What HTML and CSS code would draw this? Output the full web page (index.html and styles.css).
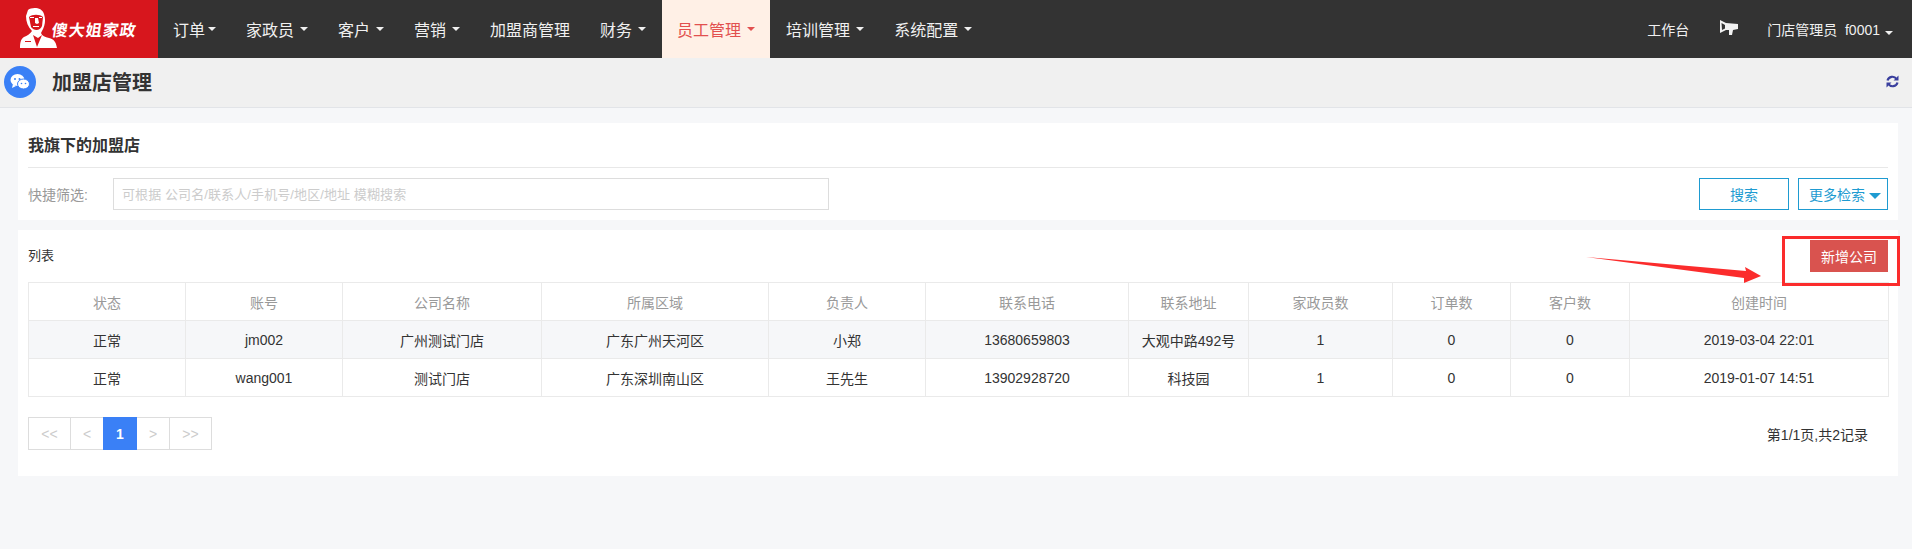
FILE: index.html
```html
<!DOCTYPE html>
<html lang="zh">
<head>
<meta charset="utf-8">
<title>加盟店管理</title>
<link rel="stylesheet" href="styles.css">
</head>
<body>
<header class="nav">
  <div class="logo">
    <svg class="logo-man" width="37" height="40" viewBox="0 0 37 40"><path fill="#fff" d="M8 2C12-1 22-1 24 6c2 6 1 12-2 17l-1 2c1 3 4 4 8 5 5 1 7 4 8 10H0c0-6 1-9 4-11 3-1 6-3 8-6C8 19 6 14 6 8z"/><path fill="#d7161d" d="M9 9c3-3 11-3 14 0l-1 9c-2 5-8 5-11 1z"/><path fill="#fff" d="M15 10h3l1 5-2 1-2-1zM10 9h4v1h-4zM19 9h3v1h-3zM13 18h6v1h-6z"/><path fill="#d7161d" d="M13 27l4 12 5-12-4 3zM5 33h6v1H5z"/></svg>
    <span class="logo-text">傻大姐家政</span>
  </div>
  <ul class="menu">
    <li class="item tight">订单<i class="caret"></i></li>
    <li class="item">家政员<i class="caret"></i></li>
    <li class="item">客户<i class="caret"></i></li>
    <li class="item">营销<i class="caret"></i></li>
    <li class="item">加盟商管理</li>
    <li class="item">财务<i class="caret"></i></li>
    <li class="item active">员工管理<i class="caret"></i></li>
    <li class="item">培训管理<i class="caret"></i></li>
    <li class="item">系统配置<i class="caret"></i></li>
  </ul>
  <div class="nav-right">
    <span>工作台</span>
    <svg class="horn" width="19" height="15" viewBox="0 0 19 15"><path fill="#f2f2f2" fill-rule="evenodd" d="M1 0l6 3 12 1v5l-5 1-1 5h-3v-5H7l-6 3zM2.500 3l.5 7 3-1.500V5z"/></svg>
    <span class="user">门店管理员&nbsp; f0001<i class="caret"></i></span>
  </div>
</header>

<div class="titlebar">
  <span class="title-icon">
    <svg width="20" height="18" viewBox="0 0 20 18"><ellipse cx="7.500" cy="7" rx="7" ry="6" fill="#fff"/><path fill="#fff" d="M3 11l-1 4 4-2z"/><ellipse cx="13.500" cy="11" rx="6" ry="5" fill="#fff" stroke="#3a80f6" stroke-width="1"/><circle cx="5" cy="6" r="1" fill="#3a80f6"/><circle cx="9.500" cy="6" r="1" fill="#3a80f6"/><circle cx="11.500" cy="10.500" r=".8" fill="#3a80f6"/><circle cx="15.500" cy="10.500" r=".8" fill="#3a80f6"/></svg>
  </span>
  <h1 class="page-title">加盟店管理</h1>
  <svg class="refresh" width="13" height="13" viewBox="0 0 13 13"><path fill="none" stroke="#3a3f9e" stroke-width="2.200" d="M1.500 5.500A5 5 0 0 1 10.500 4M11.500 7.500A5 5 0 0 1 2.500 9"/><path fill="#3a3f9e" d="M12.500 0.500v5h-5zM.5 12.500v-5h5z"/></svg>
</div>

<main class="content">
  <section class="card filter">
    <h2 class="card-title">我旗下的加盟店</h2>
    <div class="filter-row">
      <label class="filter-label">快捷筛选:</label>
      <input class="filter-input" type="text" placeholder="可根据 公司名/联系人/手机号/地区/地址 模糊搜索">
      <span class="spacer"></span>
      <button class="btn-outline">搜索</button>
      <button class="btn-outline more">更多检索<i class="caret-big"></i></button>
    </div>
  </section>

  <section class="card list">
    <div class="list-head">
      <span class="list-title">列表</span>
      <button class="btn-add">新增公司</button>
      <span class="mark-box"></span>
      <svg class="mark-arrow" width="180" height="40" viewBox="0 0 180 40"><path fill="#fb2c2c" d="M0 7l160 14-1-4 16 9-17 7v-5z"/></svg>
    </div>
    <table class="grid">
      <colgroup>
        <col class="c1"><col class="c2"><col class="c3"><col class="c4"><col class="c5"><col class="c6"><col class="c7"><col class="c8"><col class="c9"><col class="c10"><col class="c11">
      </colgroup>
      <thead>
        <tr><th>状态</th><th>账号</th><th>公司名称</th><th>所属区域</th><th>负责人</th><th>联系电话</th><th>联系地址</th><th>家政员数</th><th>订单数</th><th>客户数</th><th>创建时间</th></tr>
      </thead>
      <tbody>
        <tr class="odd"><td>正常</td><td>jm002</td><td>广州测试门店</td><td>广东广州天河区</td><td>小郑</td><td>13680659803</td><td>大观中路492号</td><td>1</td><td>0</td><td>0</td><td>2019-03-04 22:01</td></tr>
        <tr><td>正常</td><td>wang001</td><td>测试门店</td><td>广东深圳南山区</td><td>王先生</td><td>13902928720</td><td>科技园</td><td>1</td><td>0</td><td>0</td><td>2019-01-07 14:51</td></tr>
      </tbody>
    </table>
    <div class="pager-row">
      <div class="pager">
        <span class="pg w">&lt;&lt;</span><span class="pg">&lt;</span><span class="pg current">1</span><span class="pg">&gt;</span><span class="pg w">&gt;&gt;</span>
      </div>
      <span class="pager-info">第1/1页,共2记录</span>
    </div>
  </section>
</main>
</body>
</html>
```
FILE: styles.css
```css
* { box-sizing: border-box; }
html, body { margin: 0; padding: 0; }
body {
  height: 549px;
  overflow: hidden;
  background: #f6f7f9;
  color: #333;
  font-family: "Liberation Sans", "Noto Sans CJK SC", sans-serif;
  font-size: 13px;
}
.nav { display: flex; height: 58px; background: #333; color: #f0f0f0; }
.logo {
  width: 158px; background: #d7161d; display: flex; align-items: center;
  padding-left: 20px; flex: none;
}
.logo-man { flex: none; align-self: flex-start; margin-top: 8px; }
.logo-text {
  color: #fff; font-family: "Noto Sans CJK SC", sans-serif;
  font-size: 16px; font-weight: 700; letter-spacing: 1px; white-space: nowrap;
  margin-left: -5px;
  transform: skewX(-8deg);
}
.menu { display: flex; list-style: none; margin: 0; padding: 0; }
.item { display: flex; align-items: center; padding: 0 15px; font-size: 16px; height: 58px; white-space: nowrap; }
.item .caret { margin-left: 6px; }
.item.tight .caret { margin-left: 3px; }
.caret {
  display: inline-block; width: 0; height: 0; margin-left: 5px;
  border-left: 4px solid transparent; border-right: 4px solid transparent;
  border-top: 4px solid currentColor;
}
.item.active { background: #fff0e6; color: #e2504f; margin: 0 1px; }
.nav-right { margin-left: auto; display: flex; align-items: center; padding-right: 19px; font-size: 14px; }
.horn { margin: 0 29px 4px 30px; }
.titlebar {
  display: flex; align-items: center; height: 50px;
  background: #f0f0f0; border-bottom: 1px solid #e2e4e8; padding: 0 4px;
}
.title-icon {
  width: 32px; height: 32px; border-radius: 50%; background: #3a80f6;
  display: flex; align-items: center; justify-content: center; margin-bottom: 1px;
}
.page-title { margin: 0 0 2px 16px; font-size: 20px; font-weight: 700; color: #333; }
.refresh { margin-left: auto; margin-right: 9px; margin-bottom: 2px; }
.content { padding: 15px 14px 0 18px; }
.card { background: #fff; padding: 0 10px; }
.filter { height: 97px; }
.card-title {
  margin: 0; height: 45px; line-height: 46px; font-size: 16px; font-weight: 700;
  color: #333; border-bottom: 1px solid #e8e8e8;
}
.filter-row { display: flex; align-items: center; margin-top: 10px; }
.filter-label { width: 85px; font-size: 14px; color: #999; flex: none; }
.filter-input {
  width: 716px; height: 32px; border: 1px solid #ddd; padding: 0 8px;
  font-family: inherit; font-size: 13px; letter-spacing: .1px; background: #fff; outline: none;
}
.filter-input::placeholder { color: #ccc; opacity: 1; }
.spacer { flex: 1; }
.btn-outline {
  width: 90px; height: 32px; background: #fff; border: 1px solid #1e9bd1; color: #1e9bd1;
  font-family: inherit; font-size: 14px; padding: 0; margin-left: 9px; white-space: nowrap;
}
.btn-outline.more { padding-left: 4px; }
.caret-big {
  display: inline-block; width: 0; height: 0; margin-left: 4px; vertical-align: 1px;
  border-left: 6px solid transparent; border-right: 6px solid transparent;
  border-top: 6px solid #1e9bd1;
}
.list { margin-top: 10px; height: 246px; }
.list-head { position: relative; height: 52px; display: flex; align-items: center; justify-content: space-between; }
.list-title { font-size: 13px; color: #333; margin-bottom: 4px; }
.btn-add {
  width: 78px; height: 32px; background: #d9534f; border: 0; color: #fff;
  font-family: inherit; font-size: 14px; padding: 0; align-self: flex-start; margin-top: 10px;
}
.mark-box {
  position: absolute; right: -12px; top: 6px; width: 118px; height: 50px;
  border: 3px solid #fb2c2c;
}
.mark-arrow { position: absolute; left: 1558px; top: 20px; }
.grid { width: 100%; table-layout: fixed; border-collapse: collapse; font-size: 14px; }
.grid th, .grid td { border: 1px solid #eaeaea; text-align: center; height: 38px; padding: 0; font-weight: 400; }
.grid th { color: #999; }
.grid .odd td { background: #f6f7f9; }
.c1, .c2, .c5 { width: 157px; }
.c3 { width: 199px; }
.c4 { width: 227px; }
.c6 { width: 203px; }
.c7 { width: 120px; }
.c8 { width: 144px; }
.c9 { width: 118px; }
.c10 { width: 119px; }
.c11 { width: 259px; }
.pager-row { display: flex; align-items: center; justify-content: space-between; margin-top: 20px; padding-right: 20px; }
.pager { display: flex; height: 33px; border: 1px solid #ddd; }
.pg {
  width: 32px; height: 31px; display: flex; align-items: center; justify-content: center;
  color: #ccc; font-size: 14px;
}
.pg.w { width: 42px; }
.pg.w:first-child { border-right: 1px solid #ddd; }
.pg.w:last-child { border-left: 1px solid #ddd; }
.pg.current { background: #3a80f6; color: #fff; font-weight: 700; margin: -1px 0; height: 33px; width: 34px; }
.pager-info { font-size: 14px; color: #333; }
```
